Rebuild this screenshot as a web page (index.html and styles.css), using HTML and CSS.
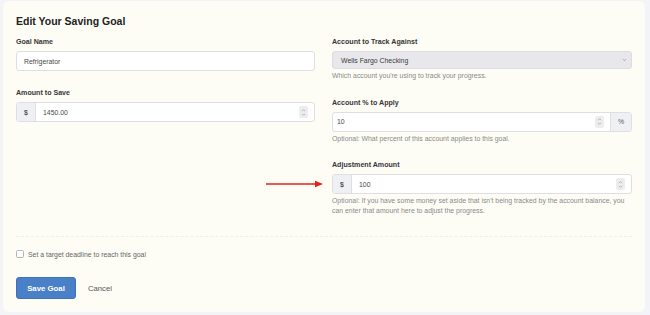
FILE: index.html
```html
<!DOCTYPE html>
<html>
<head>
    <meta charset="utf-8">
    <title>Edit Your Saving Goal</title>
    <link rel="stylesheet" href="styles.css">
</head>
<body>
    <div class="card">
        <h2 class="title">Edit Your Saving Goal</h2>

        <div class="grid">
            <div class="col">
                <div class="field">
                    <label class="label">Goal Name</label>
                    <div class="control">
                        <span class="value">Refrigerator</span>
                    </div>
                </div>
                <div class="field">
                    <label class="label">Amount to Save</label>
                    <div class="control">
                        <span class="addon">$</span>
                        <span class="value">1450.00</span>
                        <span class="spin">
                            <svg width="5" height="9" viewBox="0 0 5 9"><path d="M1 3.2 L2.5 1.7 L4 3.2 M1 5.8 L2.5 7.3 L4 5.8" fill="none" stroke="#9a9a9a" stroke-width="0.7"/></svg>
                        </span>
                    </div>
                </div>
            </div>

            <div class="col">
                <div class="field">
                    <label class="label">Account to Track Against</label>
                    <div class="select">
                        <span class="value">Wells Fargo Checking</span>
                        <svg class="chev" width="5" height="4" viewBox="0 0 5 4"><path d="M1 1.2 L2.5 2.7 L4 1.2" fill="none" stroke="#888" stroke-width="0.7"/></svg>
                    </div>
                    <p class="help">Which account you're using to track your progress.</p>
                </div>
                <div class="field">
                    <label class="label">Account % to Apply</label>
                    <div class="control">
                        <span class="value short">10</span>
                        <span class="spin">
                            <svg width="5" height="9" viewBox="0 0 5 9"><path d="M1 3.2 L2.5 1.7 L4 3.2 M1 5.8 L2.5 7.3 L4 5.8" fill="none" stroke="#9a9a9a" stroke-width="0.7"/></svg>
                        </span>
                        <span class="addon addon-right">%</span>
                    </div>
                    <p class="help">Optional: What percent of this account applies to this goal.</p>
                </div>
                <div class="field">
                    <label class="label">Adjustment Amount</label>
                    <div class="control">
                        <span class="addon">$</span>
                        <span class="value">100</span>
                        <span class="spin">
                            <svg width="5" height="9" viewBox="0 0 5 9"><path d="M1 3.2 L2.5 1.7 L4 3.2 M1 5.8 L2.5 7.3 L4 5.8" fill="none" stroke="#9a9a9a" stroke-width="0.7"/></svg>
                        </span>
                    </div>
                    <p class="help">Optional: If you have some money set aside that isn't being tracked by the account balance, you can enter that amount here to adjust the progress.</p>
                </div>
            </div>
        </div>

        <div class="divider"></div>

        <label class="check"><span class="box"></span>Set a target deadline to reach this goal</label>

        <div class="actions">
            <button class="btn">Save Goal</button>
            <a class="cancel">Cancel</a>
        </div>

        <svg class="arrow" width="58" height="10" viewBox="0 0 58 10">
            <line x1="0" y1="5" x2="50" y2="5" stroke="#e3231b" stroke-width="1.4"/>
            <path d="M49 1.8 L57 5 L49 8.2 Z" fill="#e3231b"/>
        </svg>
    </div>
</body>
</html>
```

FILE: styles.css
```css
body {
    margin: 0;
    background: #f2f4f8;
    font-family: "Liberation Sans", Arial, sans-serif;
    color: #363636;
}
.card {
    position: relative;
    margin: 1px 5px 0 3px;
    height: 311px;
    box-sizing: border-box;
    padding: 13px 13px 14px 13px;
    background: #fdfdf6;
    border-radius: 6px;
}
.title {
    margin: 0 0 8px 0;
    font-size: 10.5px;
    line-height: 15px;
    font-weight: 700;
    color: #222;
}
.grid {
    display: grid;
    grid-template-columns: 299px 300px;
    column-gap: 17px;
}
.field {
    margin-bottom: 17px;
}
.label {
    display: block;
    font-size: 7.1px;
    line-height: 10px;
    font-weight: 700;
    color: #363636;
    margin-bottom: 4px;
}
.control {
    display: flex;
    align-items: center;
    height: 20px;
    box-sizing: border-box;
    border: 1px solid #dedfe2;
    border-radius: 3px;
    background: #fff;
    overflow: hidden;
}
.value {
    flex: 1;
    padding-left: 7px;
    font-size: 6.9px;
    color: #4a4a4a;
}
.value.short {
    padding-left: 4px;
}
.addon {
    display: flex;
    align-items: center;
    justify-content: center;
    width: 18px;
    height: 100%;
    background: #eef0f4;
    border-right: 1px solid #dedfe2;
    font-size: 6.9px;
    font-weight: 700;
    color: #555;
}
.addon-right {
    width: 20px;
    border-right: none;
    border-left: 1px solid #dedfe2;
    font-weight: 400;
}
.spin {
    display: flex;
    align-items: center;
    justify-content: center;
    width: 9px;
    height: 12px;
    margin-right: 6px;
    background: #ededed;
    border-radius: 2px;
}
.select {
    display: flex;
    align-items: center;
    height: 18px;
    box-sizing: border-box;
    border: 1px solid #dcdce0;
    border-radius: 3px;
    background: #e8e8ec;
}
.select .value {
    padding-left: 8px;
    color: #3a3a3a;
}
.chev {
    margin-right: 4px;
}
.help {
    margin: 2px 0 0 0;
    font-size: 6.9px;
    line-height: 9.5px;
    color: #8a8a8a;
}
.divider {
    margin-top: 4px;
    border-top: 1px dashed #efefe6;
}
.check {
    display: flex;
    align-items: center;
    gap: 4px;
    margin-top: 12px;
    height: 10px;
    font-size: 6.9px;
    color: #666;
}
.box {
    width: 8px;
    height: 8px;
    box-sizing: border-box;
    border: 1px solid #b5b5b5;
    border-radius: 1.5px;
    background: #fff;
}
.actions {
    display: flex;
    align-items: center;
    gap: 12px;
    margin-top: 18px;
}
.btn {
    width: 60px;
    height: 22px;
    padding: 0;
    border: 1px solid #3f72b8;
    border-radius: 3px;
    background: #4a80c8;
    color: #fff;
    font-family: "Liberation Sans", Arial, sans-serif;
    font-size: 7.8px;
    font-weight: 700;
}
.cancel {
    font-size: 7.7px;
    color: #555;
}
.arrow {
    position: absolute;
    left: 263px;
    top: 178px;
}
```
